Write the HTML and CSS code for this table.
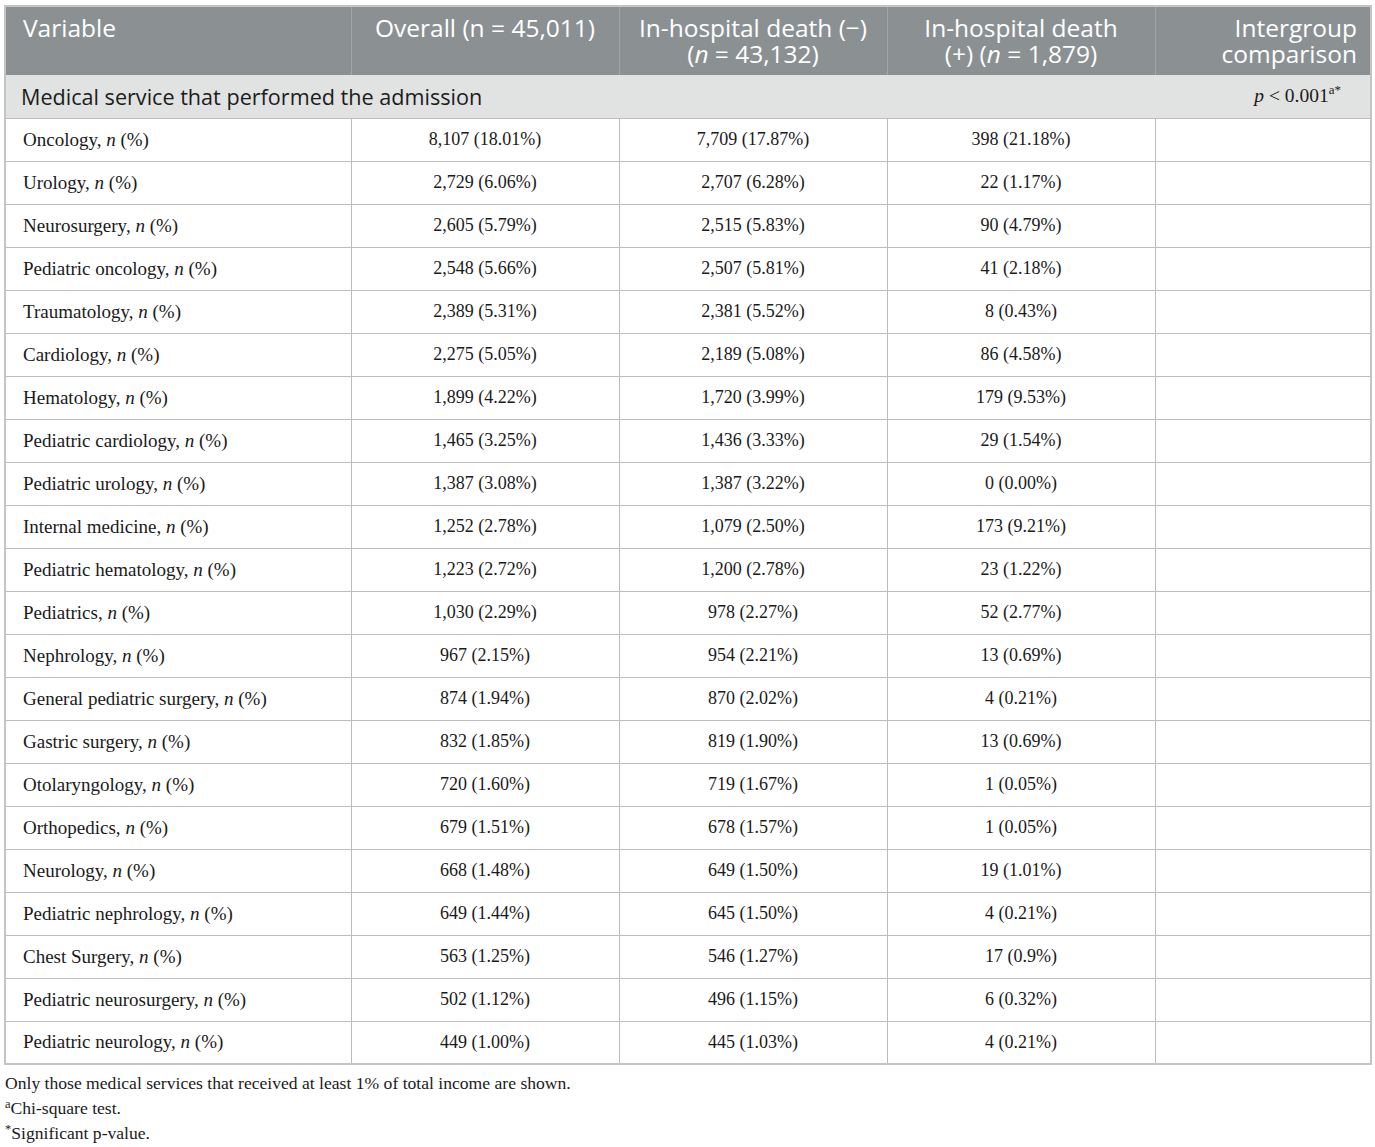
FILE: index.html
```html
<!DOCTYPE html>
<html>
<head>
<meta charset="utf-8">
<link rel="stylesheet" href="styles.css">
</head>
<body>
<table class="tbl">
  <colgroup>
    <col class="c1"><col class="c2"><col class="c3"><col class="c4"><col class="c5">
  </colgroup>
  <thead>
    <tr class="head">
      <th class="left">Variable</th>
      <th>Overall (n = 45,011)</th>
      <th>In-hospital death (&minus;)<br>(<i>n</i> = 43,132)</th>
      <th>In-hospital death<br>(+) (<i>n</i> = 1,879)</th>
      <th class="right">Intergroup<br>comparison</th>
    </tr>
  </thead>
  <tbody>
    <tr class="section">
      <td colspan="4" class="sec-title">Medical service that performed the admission</td>
      <td class="pval"><i>p</i> &lt; 0.001<sup>a*</sup></td>
    </tr>
    <tr><td class="name">Oncology, <i>n</i> (%)</td><td>8,107 (18.01%)</td><td>7,709 (17.87%)</td><td>398 (21.18%)</td><td></td></tr>
    <tr><td class="name">Urology, <i>n</i> (%)</td><td>2,729 (6.06%)</td><td>2,707 (6.28%)</td><td>22 (1.17%)</td><td></td></tr>
    <tr><td class="name">Neurosurgery, <i>n</i> (%)</td><td>2,605 (5.79%)</td><td>2,515 (5.83%)</td><td>90 (4.79%)</td><td></td></tr>
    <tr><td class="name">Pediatric oncology, <i>n</i> (%)</td><td>2,548 (5.66%)</td><td>2,507 (5.81%)</td><td>41 (2.18%)</td><td></td></tr>
    <tr><td class="name">Traumatology, <i>n</i> (%)</td><td>2,389 (5.31%)</td><td>2,381 (5.52%)</td><td>8 (0.43%)</td><td></td></tr>
    <tr><td class="name">Cardiology, <i>n</i> (%)</td><td>2,275 (5.05%)</td><td>2,189 (5.08%)</td><td>86 (4.58%)</td><td></td></tr>
    <tr><td class="name">Hematology, <i>n</i> (%)</td><td>1,899 (4.22%)</td><td>1,720 (3.99%)</td><td>179 (9.53%)</td><td></td></tr>
    <tr><td class="name">Pediatric cardiology, <i>n</i> (%)</td><td>1,465 (3.25%)</td><td>1,436 (3.33%)</td><td>29 (1.54%)</td><td></td></tr>
    <tr><td class="name">Pediatric urology, <i>n</i> (%)</td><td>1,387 (3.08%)</td><td>1,387 (3.22%)</td><td>0 (0.00%)</td><td></td></tr>
    <tr><td class="name">Internal medicine, <i>n</i> (%)</td><td>1,252 (2.78%)</td><td>1,079 (2.50%)</td><td>173 (9.21%)</td><td></td></tr>
    <tr><td class="name">Pediatric hematology, <i>n</i> (%)</td><td>1,223 (2.72%)</td><td>1,200 (2.78%)</td><td>23 (1.22%)</td><td></td></tr>
    <tr><td class="name">Pediatrics, <i>n</i> (%)</td><td>1,030 (2.29%)</td><td>978 (2.27%)</td><td>52 (2.77%)</td><td></td></tr>
    <tr><td class="name">Nephrology, <i>n</i> (%)</td><td>967 (2.15%)</td><td>954 (2.21%)</td><td>13 (0.69%)</td><td></td></tr>
    <tr><td class="name">General pediatric surgery, <i>n</i> (%)</td><td>874 (1.94%)</td><td>870 (2.02%)</td><td>4 (0.21%)</td><td></td></tr>
    <tr><td class="name">Gastric surgery, <i>n</i> (%)</td><td>832 (1.85%)</td><td>819 (1.90%)</td><td>13 (0.69%)</td><td></td></tr>
    <tr><td class="name">Otolaryngology, <i>n</i> (%)</td><td>720 (1.60%)</td><td>719 (1.67%)</td><td>1 (0.05%)</td><td></td></tr>
    <tr><td class="name">Orthopedics, <i>n</i> (%)</td><td>679 (1.51%)</td><td>678 (1.57%)</td><td>1 (0.05%)</td><td></td></tr>
    <tr><td class="name">Neurology, <i>n</i> (%)</td><td>668 (1.48%)</td><td>649 (1.50%)</td><td>19 (1.01%)</td><td></td></tr>
    <tr><td class="name">Pediatric nephrology, <i>n</i> (%)</td><td>649 (1.44%)</td><td>645 (1.50%)</td><td>4 (0.21%)</td><td></td></tr>
    <tr><td class="name">Chest Surgery, <i>n</i> (%)</td><td>563 (1.25%)</td><td>546 (1.27%)</td><td>17 (0.9%)</td><td></td></tr>
    <tr><td class="name">Pediatric neurosurgery, <i>n</i> (%)</td><td>502 (1.12%)</td><td>496 (1.15%)</td><td>6 (0.32%)</td><td></td></tr>
    <tr><td class="name">Pediatric neurology, <i>n</i> (%)</td><td>449 (1.00%)</td><td>445 (1.03%)</td><td>4 (0.21%)</td><td></td></tr>
  </tbody>
</table>
<div class="notes">
  <p>Only those medical services that received at least 1% of total income are shown.</p>
  <p><sup>a</sup>Chi-square test.</p>
  <p><sup>*</sup>Significant p-value.</p>
</div>
</body>
</html>
```

FILE: styles.css
```css
html, body {
  margin: 0;
  padding: 0;
  background: #ffffff;
}
body {
  padding: 5px 0 0 4px;
  font-family: "Liberation Serif", "Times New Roman", serif;
  color: #1a1a1a;
}
.tbl {
  border-collapse: collapse;
  width: 1366px;
  table-layout: fixed;
  border: 2px solid #c4c4c4;
}
.c1 { width: 346px; }
.c2 { width: 268px; }
.c3 { width: 268px; }
.c4 { width: 268px; }
.c5 { width: 216px; }

.head th {
  background: #8b9093;
  color: #ffffff;
  font-family: "Open Sans", "Noto Sans", sans-serif;
  font-weight: 400;
  font-size: 24.5px;
  line-height: 26px;
  height: 68px;
  padding: 8px 6px 8px;
  text-align: center;
  vertical-align: top;
  box-sizing: border-box;
  border-left: 1px solid #a2a6a9;
  white-space: nowrap;
}
.head th:first-child { border-left: none; }
.head th.left { text-align: left; padding-left: 17px; }
.head th.right { text-align: right; padding-right: 13px; }

.section td {
  background: #e1e2e2;
  height: 43px;
  box-sizing: border-box;
  padding: 0;
  border-bottom: 1px solid #bdbdbd;
}
.sec-title {
  font-family: "Open Sans", "Noto Sans", sans-serif;
  font-size: 21.6px;
  color: #1c1c1c;
  padding-left: 15px !important;
}
.pval {
  text-align: right;
  font-size: 19.5px;
  padding-right: 29px !important;
}
.pval sup {
  font-size: 13px;
  vertical-align: 8px;
  line-height: 0;
}
tbody tr:not(.section) td {
  height: 43px;
  box-sizing: border-box;
  padding: 0 8px;
  font-size: 18px;
  text-align: center;
  border: 1px solid #bdbdbd;
  color: #1a1a1a;
}
tbody tr:not(.section) td.name {
  text-align: left;
  padding-left: 17px;
  font-size: 19px;
}
.notes {
  margin-top: 6px;
  margin-left: 1px;
  font-size: 17.6px;
  line-height: 25px;
  color: #1a1a1a;
}
.notes p { margin: 0; }
.notes sup {
  font-size: 12.5px;
  vertical-align: 6px;
  line-height: 0;
}
```
